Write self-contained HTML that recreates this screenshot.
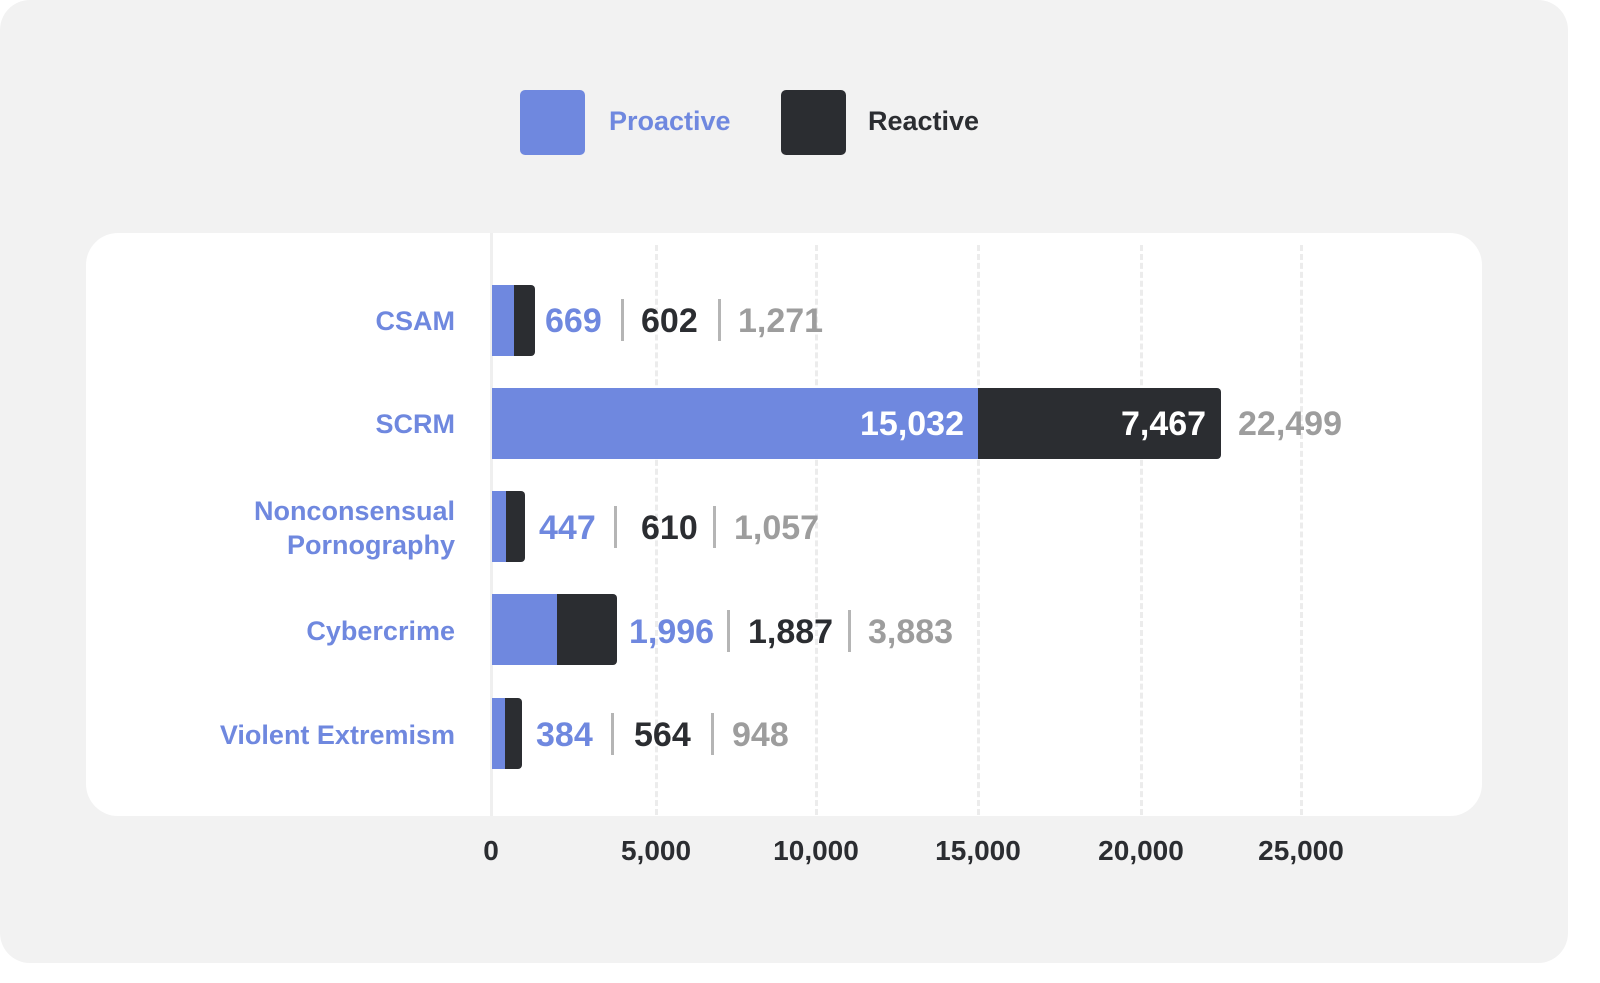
<!DOCTYPE html>
<html><head><style>
body{margin:0;width:1600px;height:983px;background:#fff;font-family:"Liberation Sans",sans-serif;font-weight:bold;position:relative;overflow:hidden}
.bg{position:absolute;left:0;top:0;width:1568px;height:963px;background:#f2f2f2;border-radius:30px}
.panel{position:absolute;left:86px;top:233px;width:1396px;height:583px;background:#fff;border-radius:32px}
.a{position:absolute}
.grid{position:absolute;top:245px;height:570px;width:0;border-left:3px dashed #ececec}
.lab{position:absolute;right:1145px;font-size:27px;color:#6f88df;text-align:right;line-height:34px}
.bar{position:absolute;height:71px}
.p{background:#6f88df}
.r{background:#2b2d31;border-radius:0 4px 4px 0}
.n{position:absolute;font-size:34px;line-height:40px}
.b{color:#6f88df}.k{color:#2b2d31}.g{color:#9d9d9d}
.s{position:absolute;width:3px;height:42px;background:#b5b5b5}
.ax{position:absolute;top:835px;font-size:28px;color:#2b2d31;transform:translateX(-50%)}
</style></head><body>
<div class="bg"></div>
<div class="a" style="left:520px;top:90px;width:65px;height:65px;background:#6f88df;border-radius:5px"></div>
<div class="a b" style="left:609px;top:106px;font-size:27px">Proactive</div>
<div class="a" style="left:781px;top:90px;width:65px;height:65px;background:#2b2d31;border-radius:5px"></div>
<div class="a k" style="left:868px;top:106px;font-size:27px">Reactive</div>
<div class="panel"></div>
<div class="a" style="left:490px;top:233px;width:3px;height:583px;background:#efefef"></div>
<div class="grid" style="left:655px"></div><div class="grid" style="left:815px"></div><div class="grid" style="left:977px"></div><div class="grid" style="left:1140px"></div><div class="grid" style="left:1300px"></div>

<div class="lab" style="top:304px">CSAM</div>
<div class="bar p" style="left:492px;top:285px;width:22px"></div><div class="bar r" style="left:514px;top:285px;width:21px"></div>
<div class="n b" style="left:545px;top:301px">669</div><div class="s" style="left:621px;top:299px"></div>
<div class="n k" style="left:641px;top:301px">602</div><div class="s" style="left:718px;top:299px"></div>
<div class="n g" style="left:738px;top:301px">1,271</div>

<div class="lab" style="top:407px">SCRM</div>
<div class="bar p" style="left:492px;top:388px;width:486px"></div><div class="bar r" style="left:978px;top:388px;width:243px"></div>
<div class="n" style="left:860px;top:404px;color:#fff">15,032</div>
<div class="n" style="left:1121px;top:404px;color:#fff">7,467</div>
<div class="n g" style="left:1238px;top:404px">22,499</div>

<div class="lab" style="top:494px">Nonconsensual<br>Pornography</div>
<div class="bar p" style="left:492px;top:491px;width:14px"></div><div class="bar r" style="left:506px;top:491px;width:19px"></div>
<div class="n b" style="left:539px;top:508px">447</div><div class="s" style="left:614px;top:506px"></div>
<div class="n k" style="left:641px;top:508px">610</div><div class="s" style="left:713px;top:506px"></div>
<div class="n g" style="left:734px;top:508px">1,057</div>

<div class="lab" style="top:614px">Cybercrime</div>
<div class="bar p" style="left:492px;top:594px;width:65px"></div><div class="bar r" style="left:557px;top:594px;width:60px"></div>
<div class="n b" style="left:629px;top:612px">1,996</div><div class="s" style="left:727px;top:610px"></div>
<div class="n k" style="left:748px;top:612px">1,887</div><div class="s" style="left:848px;top:610px"></div>
<div class="n g" style="left:868px;top:612px">3,883</div>

<div class="lab" style="top:718px">Violent Extremism</div>
<div class="bar p" style="left:492px;top:698px;width:13px"></div><div class="bar r" style="left:505px;top:698px;width:17px"></div>
<div class="n b" style="left:536px;top:715px">384</div><div class="s" style="left:611px;top:713px"></div>
<div class="n k" style="left:634px;top:715px">564</div><div class="s" style="left:711px;top:713px"></div>
<div class="n g" style="left:732px;top:715px">948</div>

<div class="ax" style="left:491px">0</div><div class="ax" style="left:656px">5,000</div><div class="ax" style="left:816px">10,000</div><div class="ax" style="left:978px">15,000</div><div class="ax" style="left:1141px">20,000</div><div class="ax" style="left:1301px">25,000</div>
</body></html>
